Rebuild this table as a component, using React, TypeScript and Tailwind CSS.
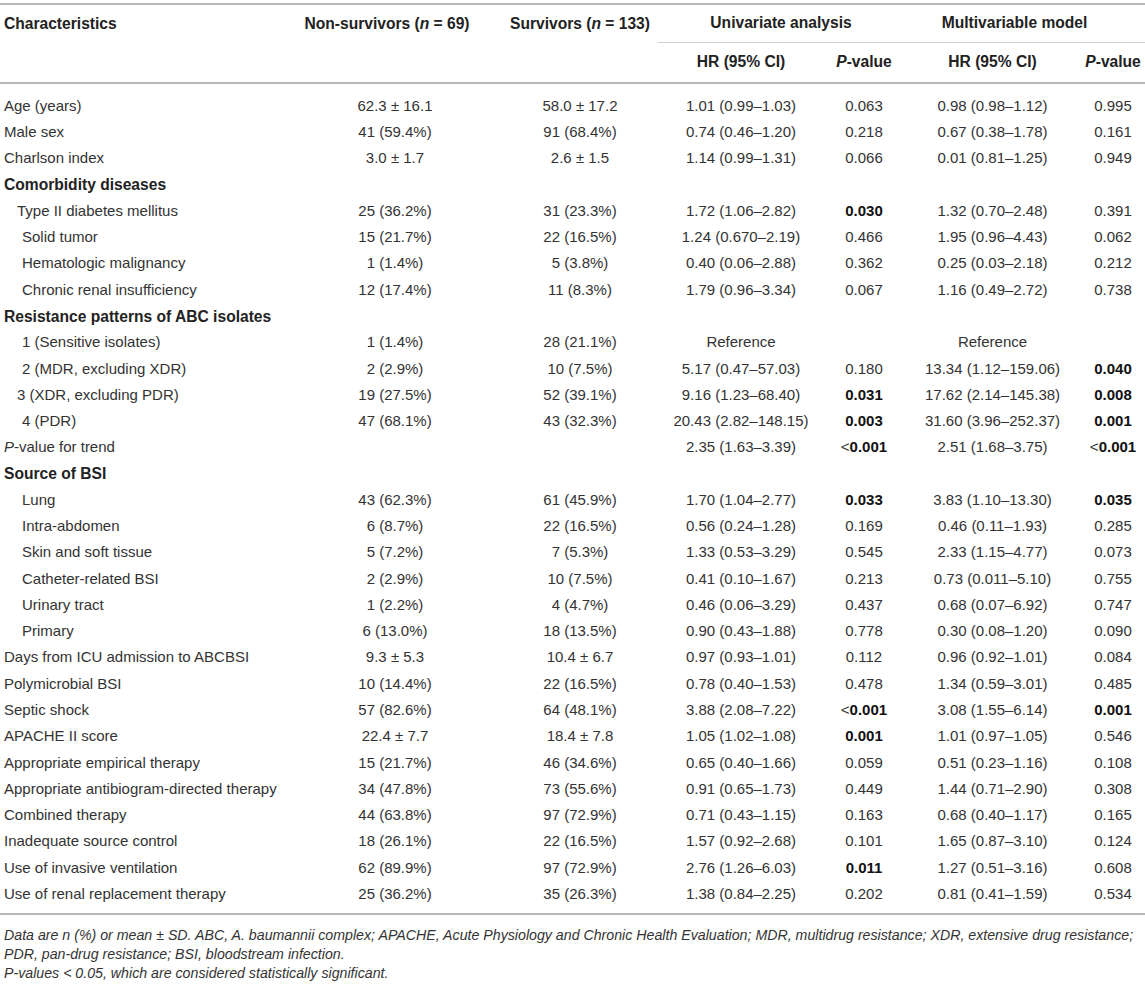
import React from 'react';

type Cell = string;

type Row = {
    label: React.ReactNode;
    pad?: string;
    section?: boolean;
    c?: [Cell, Cell, Cell, Cell, Cell, Cell];
};

// a leading "*" marks a bold (significant) p-value
function PVal({ v }: { v: string }) {
    if (!v.startsWith('*')) return <>{v}</>;
    const s = v.slice(1);
    if (s.startsWith('<')) {
        return (
            <>
                <span className="font-normal">&lt;</span>
                <b className="font-bold text-[15px] text-[#111]">{s.slice(1)}</b>
            </>
        );
    }
    return <b className="font-bold text-[15px] text-[#111]">{s}</b>;
}

const rows: Row[] = [
    { label: 'Age (years)', c: ['62.3 ± 16.1', '58.0 ± 17.2', '1.01 (0.99–1.03)', '0.063', '0.98 (0.98–1.12)', '0.995'] },
    { label: 'Male sex', c: ['41 (59.4%)', '91 (68.4%)', '0.74 (0.46–1.20)', '0.218', '0.67 (0.38–1.78)', '0.161'] },
    { label: 'Charlson index', c: ['3.0 ± 1.7', '2.6 ± 1.5', '1.14 (0.99–1.31)', '0.066', '0.01 (0.81–1.25)', '0.949'] },
    { label: 'Comorbidity diseases', section: true },
    { label: 'Type II diabetes mellitus', pad: 'pl-[17px]', c: ['25 (36.2%)', '31 (23.3%)', '1.72 (1.06–2.82)', '*0.030', '1.32 (0.70–2.48)', '0.391'] },
    { label: 'Solid tumor', pad: 'pl-[22px]', c: ['15 (21.7%)', '22 (16.5%)', '1.24 (0.670–2.19)', '0.466', '1.95 (0.96–4.43)', '0.062'] },
    { label: 'Hematologic malignancy', pad: 'pl-[22px]', c: ['1 (1.4%)', '5 (3.8%)', '0.40 (0.06–2.88)', '0.362', '0.25 (0.03–2.18)', '0.212'] },
    { label: 'Chronic renal insufficiency', pad: 'pl-[22px]', c: ['12 (17.4%)', '11 (8.3%)', '1.79 (0.96–3.34)', '0.067', '1.16 (0.49–2.72)', '0.738'] },
    { label: 'Resistance patterns of ABC isolates', section: true },
    { label: '1 (Sensitive isolates)', pad: 'pl-[22px]', c: ['1 (1.4%)', '28 (21.1%)', 'Reference', '', 'Reference', ''] },
    { label: '2 (MDR, excluding XDR)', pad: 'pl-[22px]', c: ['2 (2.9%)', '10 (7.5%)', '5.17 (0.47–57.03)', '0.180', '13.34 (1.12–159.06)', '*0.040'] },
    { label: '3 (XDR, excluding PDR)', pad: 'pl-[17px]', c: ['19 (27.5%)', '52 (39.1%)', '9.16 (1.23–68.40)', '*0.031', '17.62 (2.14–145.38)', '*0.008'] },
    { label: '4 (PDR)', pad: 'pl-[22px]', c: ['47 (68.1%)', '43 (32.3%)', '20.43 (2.82–148.15)', '*0.003', '31.60 (3.96–252.37)', '*0.001'] },
    {
        label: (
            <>
                <i>P</i>-value for trend
            </>
        ),
        c: ['', '', '2.35 (1.63–3.39)', '*<0.001', '2.51 (1.68–3.75)', '*<0.001'],
    },
    { label: 'Source of BSI', section: true },
    { label: 'Lung', pad: 'pl-[22px]', c: ['43 (62.3%)', '61 (45.9%)', '1.70 (1.04–2.77)', '*0.033', '3.83 (1.10–13.30)', '*0.035'] },
    { label: 'Intra-abdomen', pad: 'pl-[22px]', c: ['6 (8.7%)', '22 (16.5%)', '0.56 (0.24–1.28)', '0.169', '0.46 (0.11–1.93)', '0.285'] },
    { label: 'Skin and soft tissue', pad: 'pl-[22px]', c: ['5 (7.2%)', '7 (5.3%)', '1.33 (0.53–3.29)', '0.545', '2.33 (1.15–4.77)', '0.073'] },
    { label: 'Catheter-related BSI', pad: 'pl-[22px]', c: ['2 (2.9%)', '10 (7.5%)', '0.41 (0.10–1.67)', '0.213', '0.73 (0.011–5.10)', '0.755'] },
    { label: 'Urinary tract', pad: 'pl-[22px]', c: ['1 (2.2%)', '4 (4.7%)', '0.46 (0.06–3.29)', '0.437', '0.68 (0.07–6.92)', '0.747'] },
    { label: 'Primary', pad: 'pl-[22px]', c: ['6 (13.0%)', '18 (13.5%)', '0.90 (0.43–1.88)', '0.778', '0.30 (0.08–1.20)', '0.090'] },
    { label: 'Days from ICU admission to ABCBSI', c: ['9.3 ± 5.3', '10.4 ± 6.7', '0.97 (0.93–1.01)', '0.112', '0.96 (0.92–1.01)', '0.084'] },
    { label: 'Polymicrobial BSI', c: ['10 (14.4%)', '22 (16.5%)', '0.78 (0.40–1.53)', '0.478', '1.34 (0.59–3.01)', '0.485'] },
    { label: 'Septic shock', c: ['57 (82.6%)', '64 (48.1%)', '3.88 (2.08–7.22)', '*<0.001', '3.08 (1.55–6.14)', '*0.001'] },
    { label: 'APACHE II score', c: ['22.4 ± 7.7', '18.4 ± 7.8', '1.05 (1.02–1.08)', '*0.001', '1.01 (0.97–1.05)', '0.546'] },
    { label: 'Appropriate empirical therapy', c: ['15 (21.7%)', '46 (34.6%)', '0.65 (0.40–1.66)', '0.059', '0.51 (0.23–1.16)', '0.108'] },
    { label: 'Appropriate antibiogram-directed therapy', c: ['34 (47.8%)', '73 (55.6%)', '0.91 (0.65–1.73)', '0.449', '1.44 (0.71–2.90)', '0.308'] },
    { label: 'Combined therapy', c: ['44 (63.8%)', '97 (72.9%)', '0.71 (0.43–1.15)', '0.163', '0.68 (0.40–1.17)', '0.165'] },
    { label: 'Inadequate source control', c: ['18 (26.1%)', '22 (16.5%)', '1.57 (0.92–2.68)', '0.101', '1.65 (0.87–3.10)', '0.124'] },
    { label: 'Use of invasive ventilation', c: ['62 (89.9%)', '97 (72.9%)', '2.76 (1.26–6.03)', '*0.011', '1.27 (0.51–3.16)', '0.608'] },
    { label: 'Use of renal replacement therapy', c: ['25 (36.2%)', '35 (26.3%)', '1.38 (0.84–2.25)', '0.202', '0.81 (0.41–1.59)', '0.534'] },
];

export default function App() {
    return (
        <div className="w-[1145px] min-h-[987px] bg-white pt-[3px] font-['Liberation_Sans',Arial,sans-serif] text-[15px] text-[#333]">
            <table className="w-[1145px] table-fixed border-collapse">
                <colgroup>
                    <col className="w-[288px]" />
                    <col className="w-[214px]" />
                    <col className="w-[156px]" />
                    <col className="w-[166px]" />
                    <col className="w-[80px]" />
                    <col className="w-[177px]" />
                    <col className="w-[64px]" />
                </colgroup>
                <thead className="font-bold text-[15.6px] text-[#222]">
                    <tr className="h-[38px] border-t-2 border-[#b8b8b8]">
                        <th rowSpan={2} className="pl-[4px] pt-[9px] align-top text-left leading-5 font-bold border-b-2 border-[#b8b8b8]">
                            Characteristics
                        </th>
                        <th rowSpan={2} className="pr-[16px] pt-[9px] align-top text-center leading-5 font-bold border-b-2 border-[#b8b8b8]">
                            Non-survivors (<i>n</i> = 69)
                        </th>
                        <th rowSpan={2} className="pt-[9px] align-top text-center leading-5 font-bold border-b-2 border-[#b8b8b8]">
                            Survivors (<i>n</i> = 133)
                        </th>
                        <th colSpan={2} className="text-center leading-5 font-bold border-b border-[#d0d0d0]">
                            Univariate analysis
                        </th>
                        <th colSpan={2} className="pr-[20px] text-center leading-5 font-bold border-b border-[#d0d0d0]">
                            Multivariable model
                        </th>
                    </tr>
                    <tr className="h-[41px]">
                        <th className="text-center leading-5 font-bold border-b-2 border-[#b8b8b8]">HR (95% CI)</th>
                        <th className="text-center leading-5 font-bold border-b-2 border-[#b8b8b8]">
                            <i>P</i>-value
                        </th>
                        <th className="text-center leading-5 font-bold border-b-2 border-[#b8b8b8]">HR (95% CI)</th>
                        <th className="text-center leading-5 font-bold border-b-2 border-[#b8b8b8]">
                            <i>P</i>-value
                        </th>
                    </tr>
                </thead>
                <tbody>
                    <tr className="h-[10px]">
                        <td colSpan={7}></td>
                    </tr>
                    {rows.map((r, i) => (
                        <tr key={i} className="h-[26.27px]">
                            {r.section ? (
                                <td colSpan={7} className="pl-[4px] font-bold text-[15.6px] text-[#222] whitespace-nowrap">
                                    {r.label}
                                </td>
                            ) : (
                                <>
                                    <td className={`${r.pad ?? 'pl-[4px]'} whitespace-nowrap`}>{r.label}</td>
                                    <td className="text-center whitespace-nowrap">{r.c![0]}</td>
                                    <td className="text-center whitespace-nowrap">{r.c![1]}</td>
                                    <td className="text-center whitespace-nowrap">{r.c![2]}</td>
                                    <td className="text-center whitespace-nowrap">
                                        <PVal v={r.c![3]} />
                                    </td>
                                    <td className="text-center whitespace-nowrap">{r.c![4]}</td>
                                    <td className="text-center whitespace-nowrap">
                                        <PVal v={r.c![5]} />
                                    </td>
                                </>
                            )}
                        </tr>
                    ))}
                    <tr className="h-[7px] border-b-2 border-[#b8b8b8]">
                        <td colSpan={7}></td>
                    </tr>
                </tbody>
            </table>

            {/* Footnotes */}
            <div className="pl-[4px] pt-[11px] text-[14.2px] italic leading-[19px] text-[#333]">
                <p className="whitespace-nowrap">
                    Data are n (%) or mean ± SD. ABC, A. baumannii complex; APACHE, Acute Physiology and Chronic Health Evaluation; MDR, multidrug resistance; XDR, extensive drug resistance;
                </p>
                <p className="whitespace-nowrap">PDR, pan-drug resistance; BSI, bloodstream infection.</p>
                <p className="whitespace-nowrap">P-values &lt; 0.05, which are considered statistically significant.</p>
            </div>
        </div>
    );
}
